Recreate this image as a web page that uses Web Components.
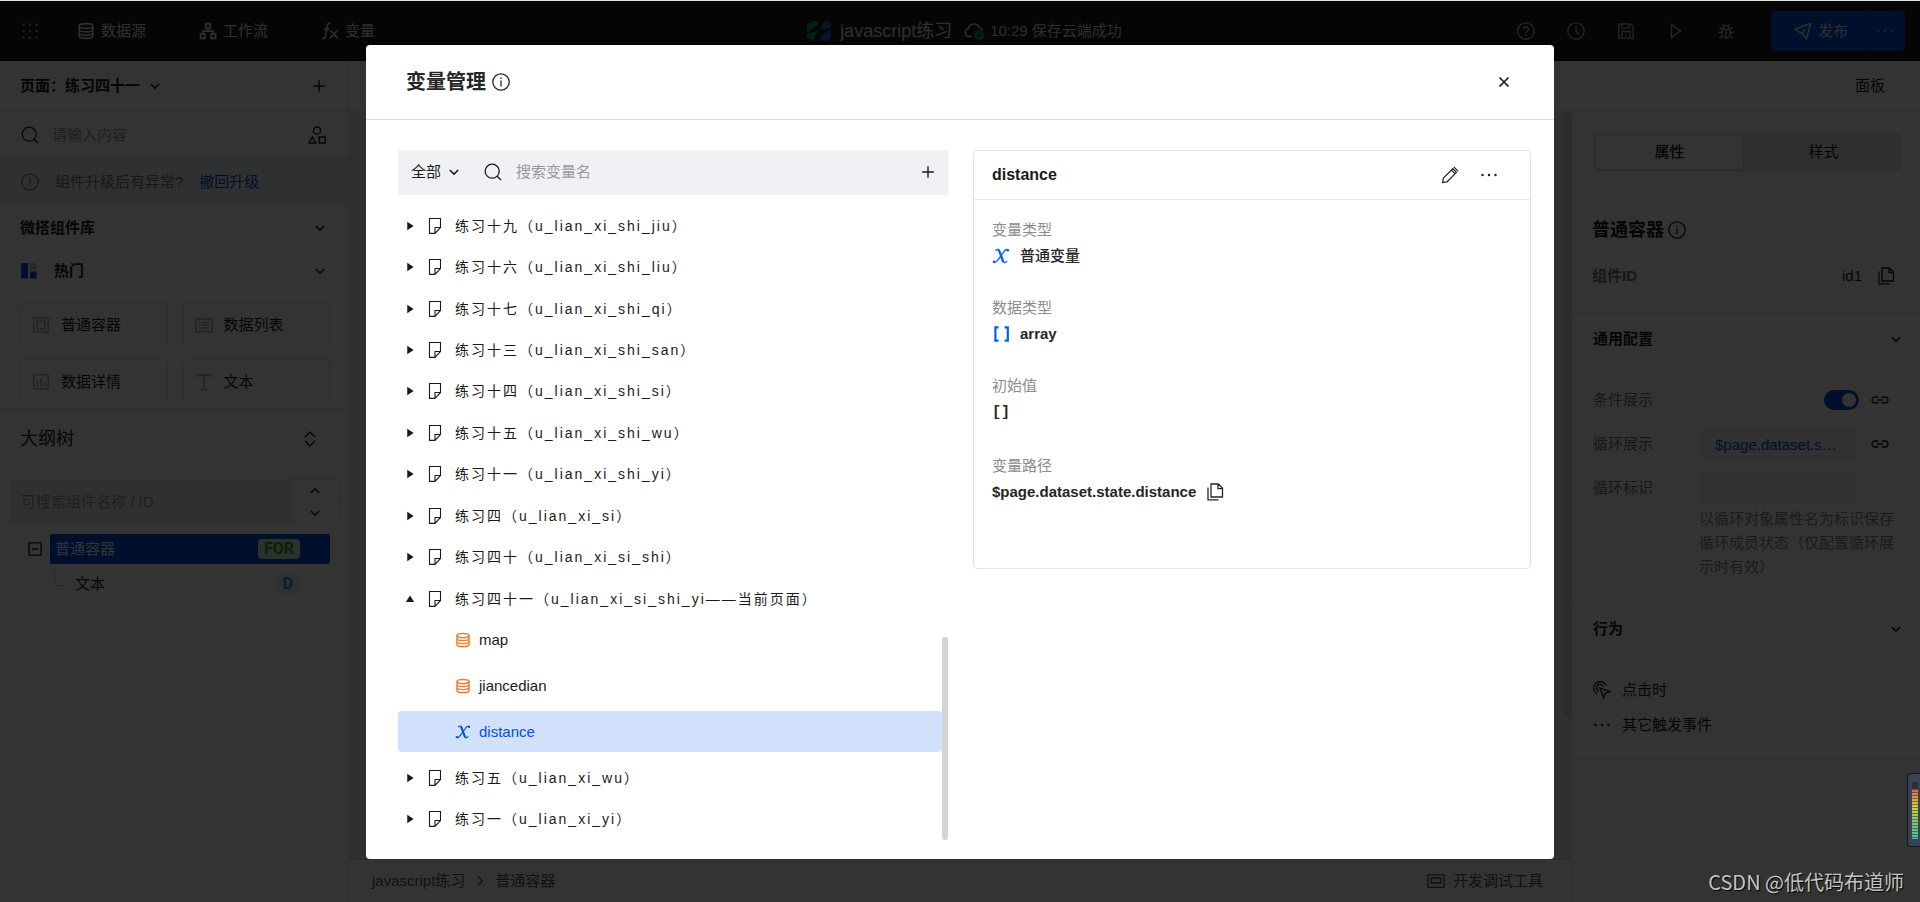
<!DOCTYPE html>
<html lang="zh-CN">
<head>
<meta charset="utf-8">
<title>变量管理</title>
<style>
html, body { margin: 0; height: 100%; }
body {
  font: 15px/24px "Liberation Sans", "Noto Sans CJK SC", sans-serif;
  color: #1a1a1a;
  background: #fff;
  overflow: hidden;
}
</style>
</head>
<body>
<low-code-app></low-code-app>
<script>
const BASE = `
*, *::before, *::after { box-sizing: border-box; }
:host { box-sizing: border-box; }
:host([hidden]) { display: none; }
button, input, select { font: inherit; color: inherit; background: none; border: 0; padding: 0; margin: 0; outline: 0; }
button { display: inline-flex; align-items: center; cursor: pointer; }
a { color: inherit; text-decoration: none; }
h1, h2, h3, p, ul, ol, dl, dt, dd { margin: 0; padding: 0; font: inherit; }
ul, ol { list-style: none; }
`;

function define(name, css, html) {
  const template = document.createElement('template');
  const isFn = typeof html === 'function';
  if (!isFn) template.innerHTML = `<style>${BASE}${css}</style>${html}`;
  customElements.define(name, class extends HTMLElement {
    connectedCallback() {
      if (this.shadowRoot) return;
      const root = this.attachShadow({ mode: 'open' });
      if (isFn) root.innerHTML = `<style>${BASE}${css}</style>${html(this)}`;
      else root.append(template.content.cloneNode(true));
    }
  });
}

/* ---------- icons: 18 x 18 grid, stroked with the current colour ---------- */
const DB = '<ellipse cx="9" cy="4" rx="6.8" ry="2.4"/><path d="M2.2 4v10c0 1.3 3 2.4 6.8 2.4s6.8-1.1 6.8-2.4V4M2.2 7.4c0 1.3 3 2.3 6.8 2.3s6.8-1 6.8-2.3M2.2 10.8c0 1.3 3 2.3 6.8 2.3s6.8-1 6.8-2.3"/>';
const ICONS = {
  grid: '<g fill="currentColor" stroke="none">' + [2.5, 9, 15.5].map(y => [2.5, 9, 15.5].map(x => `<circle cx="${x}" cy="${y}" r="1.3"/>`).join('')).join('') + '</g>',
  database: `<g stroke-width="1.6">${DB}</g>`,
  flow: '<g stroke-width="1.7"><rect x="6.8" y="1.8" width="4.4" height="4.4"/><rect x="1.5" y="12" width="4.4" height="4.4"/><rect x="12.1" y="12" width="4.4" height="4.4"/><path d="M9 6.2v3M3.7 12V9.2h10.6V12"/></g>',
  fx: '<path stroke-width="1.6" d="M1 16.4c2.6.6 3.3-.8 3.7-3.2L6.2 4C6.6 1.6 7.4.8 9.6 1.2M2.8 6.9h5.4M9.2 8.2l7.4 7.9M16.8 8.2l-7.8 7.9"/>',
  help: '<circle cx="9" cy="9" r="8.2"/><path d="M6.6 7.2c0-3.2 4.9-3 4.9-.1 0 1.8-2.4 1.9-2.4 3.9M9.05 12.6v1.4"/>',
  clock: '<circle cx="9" cy="9" r="8.2"/><path d="M9 4v5.2l3 3.3"/>',
  save: '<path d="M1.8 1.8h11.4l3 3v11.4H1.8zM5 16V9.5h8V16M5 2v4.2h7V2M9.2 11.5v3"/>',
  play: '<path stroke-width="1.5" d="M4.5 2.4v13.2L13.5 9z"/>',
  bug: '<path d="M5 7.5h8v4.3a4 4.3 0 0 1-8 0zM6 7.2a3 3.7 0 0 1 6 0M9 8v8M5 10.5H1.5M13 10.5h3.5M5 7.5 2.3 5M13 7.5 15.7 5M5.5 13.5l-3 2.7M12.5 13.5l3 2.7M6.5 3.8 5 1.8M11.5 3.8 13 1.8"/>',
  send: '<path stroke-width="1.5" d="M16.8 1.2.8 7.2l4.6 3M16.8 1.2 12.5 16.8 7.8 11.5l3.6-4.3M5.4 10.2l2.4 1.3"/>',
  more: '<g fill="currentColor" stroke="none"><circle cx="2.5" cy="9" r="1.2"/><circle cx="9" cy="9" r="1.2"/><circle cx="15.5" cy="9" r="1.2"/></g>',
  down: '<path stroke-width="1.5" d="M4.8 7 9 11.1 13.2 7"/>',
  up: '<path stroke-width="1.5" d="M4.8 11 9 6.9l4.2 4.1"/>',
  right: '<path d="M7 4.5 11.3 9 7 13.5"/>',
  plus: '<path stroke-width="1.4" d="M9 3.2v11.6M3.2 9h11.6"/>',
  search: '<circle cx="8.2" cy="8.2" r="7"/><path d="m13.2 13.2 3.8 3.8"/>',
  shapes: '<circle cx="9" cy="4.6" r="3.6"/><path d="M4.3 10.8.9 17h6.8zM11.2 11h6v6h-6z"/>',
  warn: '<circle cx="9" cy="9" r="8.2"/><path d="M9 4.5v6M9 12v1.6"/>',
  info: '<circle cx="9" cy="9" r="8.2"/><path d="M9 7.5v6M9 4.5v1.5"/>',
  hot: '<g stroke="none"><path fill="#0052d9" d="M1 1h7v15.5H1zM10 9.5h6.5v7H10z"/><path fill="#b5c9f0" d="M10 1h6.5v6.5H10z"/></g>',
  box: '<path d="M1.8 1.8h14.4v14.4H1.8zM5.2 5.2h7.6v7.6H5.2z"/>',
  list: '<path d="M.8 3h16.4v12.5H.8zM4 6.5h1.2M6.5 6.5H14M4 9.2h1.2M6.5 9.2H14M4 12h1.2M6.5 12H14"/>',
  chart: '<path d="M1.8 1.8h14.4v14.4H1.8zM5.2 7.5v6M9 5v8.5M12.8 9.5v4"/>',
  text: '<path d="M1.8 4.8V2h14.4v2.8M9 2v14.2M5.5 16.5h7"/>',
  updown: '<path stroke-width="1.5" d="M4 7 9 2l5 5M4 11l5 5 5-5"/>',
  minus: '<path stroke-width="1.5" d="M2.2 2.2h13.6v13.6H2.2zM5.5 9h7"/>',
  close: '<path stroke-width="1.7" d="m4.5 4.5 9 9M13.5 4.5l-9 9"/>',
  page: '<path stroke-width="1.1" d="M14.5 10.5V1.5h-11v14.900H9zM9 16.2v-5.700h5.300"/>',
  tright: '<path fill="currentColor" stroke="none" d="M4 1.5 15.500 9 4 16.500z"/>',
  tup: '<path fill="currentColor" stroke="none" d="M9 2.500 16.500 14.500H1.500z"/>',
  edit: '<path stroke-width="1.2" d="m1.7 16.5.6-4.3L11.8 2.7l3.6 3.6L6 15.9zM10.4 4.2l3.5 3.5M12.8.9l4.2 4.2"/>',
  copy: '<path d="M5 1h7.3l4.2 4.3V14H5zM12 1.2v4.5h4.3"/><path d="M2 4.5v12.3h10.5"/>',
  link: '<path d="M7.2 6H4a3 3 0 0 0 0 6h3.2M10.8 6H14a3 3 0 0 1 0 6h-3.2M6 9h6"/>',
  click: '<path d="M4.2 13A6.6 6.6 0 1 1 13.4 4.5M5.6 10.2a3.7 3.7 0 1 1 5-5M7 7l10 3.6-4.7 1.7L10.5 17z"/>',
  panel: '<path d="M1 2.8h16v12.6H1zM4.2 6h9.6v5H4.2z"/>',
  variable: '<path stroke-width="2.4" d="M6.3 2.6c1.7 1.3 3.6 9.9 5.3 12.6"/><path stroke-width="1.3" d="M3.6 3.6c.7-.9 1.7-1.5 3-1.3M11.5 15.5c1.4.5 2.6-.2 3.5-1.5M16.4 3.2c-1.7-1.5-3-.6-4.6 1.6L6.2 12.6c-1.5 2.2-2.9 3.7-5 2.4"/><g fill="currentColor" stroke="none"><circle cx="15.8" cy="3.3" r="1.3"/><circle cx="2" cy="14.7" r="1.3"/></g>',
  array: '<path stroke-width="2.2" d="M6.6 2.4H3.4v13.2h3.2M12.6 2.4h3.2v13.2h-3.2"/>',
  logo: '<g stroke="none"><path fill="#0c9d62" d="M0 3.4 4.8 1.5h2L8.9 3.4 4 7.5 0 9.9zM0 10.9 7.3 9 9.5 8.2 6.5 11.5 5.5 16.5 0 14.4z"/><path fill="#2f62d8" d="M9.3 7.6 12.5 2.4 15.5 1.5 18 3.4V6L13.5 8zM18 7.9v6.5L14.5 16.5h-2L9 14.8 13.5 10.5z"/></g>',
  cloud: '<path d="M7 14H4.5A3.7 3.7 0 0 1 4 6.7 5 5 0 0 1 13.6 6c1.5.3 2.5 1.2 3 2.4"/><circle cx="13.5" cy="12.5" r="4.5" fill="#0a9d5c" stroke="none"/><path stroke="#191919" d="m11.5 12.5 1.5 1.6 2.5-2.8"/>'
};
define('ui-icon',
  ':host{display:inline-flex;flex:none} svg{display:block;fill:none;stroke:currentColor;stroke-width:1.3}',
  el => { const s = el.getAttribute('size') || 18;
    return `<svg width="${s}" height="${s}" viewBox="0 0 18 18" aria-hidden="true">${ICONS[el.getAttribute('name')]}</svg>`; });

/* ---------- top bar ---------- */
define('nav-link',
  ':host{display:inline-flex} a{display:flex;align-items:center;gap:6px}',
  el => `<a href="#"><ui-icon name="${el.getAttribute('icon')}"></ui-icon><slot></slot></a>`);

define('top-bar', `
:host { display: grid; grid-template-columns: 1fr auto 1fr; align-items: center; height: 60px; background: #191919; color: #e8e8e8; }
nav { display: flex; align-items: center; gap: 53px; padding-left: 21px; }
nav button { color: #999; margin-right: -15px; }
.doc { display: flex; align-items: center; padding-left: 9px; }
.doc h1 { font-size: 18px; margin: 0 12px 0 9px; }
.doc span { margin-left: 6px; color: #ddd; }
.tools { display: flex; align-items: center; justify-content: flex-end; gap: 32px; padding-right: 15px; color: #bbb; }
.publish { display: flex; margin-left: 4px; height: 40px; background: #0052d9; border-radius: 4px; color: #e8e8e8; }
.publish .go { padding: 0 17px 0 23px; gap: 6px; border-right: 1px solid #003cab; }
.publish .opt { padding: 0 11px 0 10px; color: #b0b0b0; }
`, `
<nav aria-label="主导航"><button aria-label="应用"><ui-icon name="grid"></ui-icon></button>
<nav-link icon="database">数据源</nav-link><nav-link icon="flow">工作流</nav-link><nav-link icon="fx">变量</nav-link></nav>
<div class="doc"><ui-icon name="logo" size="24"></ui-icon><h1>javascript练习</h1><ui-icon name="cloud" size="20"></ui-icon><span>10:29 保存云端成功</span></div>
<div class="tools">
<button aria-label="帮助"><ui-icon name="help"></ui-icon></button><button aria-label="历史"><ui-icon name="clock"></ui-icon></button>
<button aria-label="保存"><ui-icon name="save"></ui-icon></button><button aria-label="预览"><ui-icon name="play"></ui-icon></button>
<button aria-label="调试"><ui-icon name="bug"></ui-icon></button>
<div class="publish"><button class="go"><ui-icon name="send"></ui-icon>发布</button><button class="opt" aria-label="更多发布选项"><ui-icon name="more"></ui-icon></button></div>
</div>`);

/* ---------- left panel ---------- */
define('component-tile', `
:host { display: block; }
button { width: 100%; height: 45px; gap: 11px; padding: 0 11px; border: 1px solid #e2e2e2; border-radius: 4px; }
ui-icon { color: #9aa3b5; }
`, el => `<button><ui-icon name="${el.getAttribute('icon')}"></ui-icon><slot></slot></button>`);

define('outline-tree', `
:host { display: block; padding: 0 18px 0 50px; margin-top: 10px; }
.node { display: flex; align-items: center; height: 30px; padding: 0 30px 0 5px; border-radius: 2px; background: #0052d9; color: #fff; position: relative; }
.toggle { position: absolute; left: -23px; top: 7px; color: #1a1a1a; }
.name { flex: 1; }
.tag { font: bold 16px/20px Roboto, "Liberation Sans", sans-serif; padding: 0 6px; border-radius: 4px; background: #d6f5d6; color: #2ba82f; }
.child { background: none; color: #1a1a1a; height: 36px; margin-top: 2px; padding-left: 25px; }
.child::before { content: ""; position: absolute; left: 4px; top: 4px; width: 14px; height: 16px; border: solid #d0d0d0; border-width: 0 0 1px 1px; }
.child .tag { background: #e6eef5; color: #00a0e9; padding: 0 7px; }
`, `<ul><li class="node"><button class="toggle" aria-label="收起"><ui-icon name="minus" size="16"></ui-icon></button><span class="name">普通容器</span><span class="tag">FOR</span></li>
<li class="node child"><span class="name">文本</span><span class="tag">D</span></li></ul>`);

define('side-panel', `
:host { display: block; background: #fff; border-right: 1px solid #e6e6e6; }
.row { display: flex; align-items: center; justify-content: space-between; padding: 0 19px 0 20px; }
.head { height: 51px; border-bottom: 1px solid #e6e6e6; font-weight: bold; padding-right: 20px; }
.head button { gap: 6px; font-weight: bold; }
.search { height: 46px; border-bottom: 1px solid #dedede; padding-right: 22px; padding-left: 21px; gap: 13px; }
.search input { flex: 1; min-width: 0; }
input::placeholder { color: #999; opacity: 1; }
.notice { height: 48px; background: #eaf0f8; justify-content: flex-start; padding-left: 21px; gap: 16px; color: #777; border-bottom: 1px solid #dde3ee; }
.notice a { color: #0052d9; }
.group { height: 43px; font-weight: bold; }
.group span { display: flex; align-items: center; gap: 16px; }
.tiles { display: grid; grid-template-columns: 1fr 1fr; gap: 12px 15px; padding: 10px 18px 4px 20px; border-bottom: 1px solid #dedede; }
.outline { height: 60px; font-size: 18px; padding-right: 29px; }
.find { display: flex; margin: 10px 8px 0 10px; height: 45px; }
.find input { flex: 1; min-width: 0; background: #f0f0f0; border-radius: 4px 0 0 4px; padding: 0 11px; }
.step { display: grid; width: 50px; border: 1px solid #dedede; }
.step button { justify-content: center; }
.step button + button { border-top: 1px solid #dedede; }
`, `
<div class="row head"><button>页面：练习四十一<ui-icon name="down"></ui-icon></button><button aria-label="新建页面"><ui-icon name="plus"></ui-icon></button></div>
<div class="row search"><ui-icon name="search"></ui-icon><input type="text" aria-label="搜索组件" placeholder="请输入内容"><button aria-label="组件分类"><ui-icon name="shapes"></ui-icon></button></div>
<div class="row notice"><ui-icon name="warn"></ui-icon><span>组件升级后有异常?</span><a href="#">撤回升级</a></div>
<div class="row group"><span>微搭组件库</span><ui-icon name="down"></ui-icon></div>
<div class="row group"><span><ui-icon name="hot"></ui-icon>热门</span><ui-icon name="down"></ui-icon></div>
<div class="tiles"><component-tile icon="box">普通容器</component-tile><component-tile icon="list">数据列表</component-tile><component-tile icon="chart">数据详情</component-tile><component-tile icon="text">文本</component-tile></div>
<div class="row outline"><h2>大纲树</h2><button aria-label="展开全部"><ui-icon name="updown"></ui-icon></button></div>
<div class="find"><input type="text" aria-label="搜索大纲树" placeholder="可搜索组件名称 / ID"><div class="step"><button aria-label="上一个"><ui-icon name="up"></ui-icon></button><button aria-label="下一个"><ui-icon name="down"></ui-icon></button></div></div>
<outline-tree></outline-tree>`);

/* ---------- canvas ---------- */
define('canvas-area', `
:host { display: flex; flex-direction: column; min-width: 0; background: #ebebeb; }
.stage { flex: 1; display: flex; justify-content: flex-end; }
.thumb { width: 7px; height: 81%; border-radius: 4px; background: #d4d4d4; }
footer { display: flex; align-items: center; gap: 6px; height: 43px; padding: 0 28px 0 23px; background: #fff; border-top: 1px solid #e0e0e0; color: #555; }
.dev { margin-left: auto; gap: 8px; }
`, `
<div class="stage"><div class="thumb"></div></div>
<footer><a href="#">javascript练习</a><ui-icon name="right"></ui-icon><a href="#">普通容器</a><button class="dev"><ui-icon name="panel"></ui-icon>开发调试工具</button></footer>`);

/* ---------- property panel ---------- */
define('panel-section', `
:host { display: block; border-top: 1px solid #e0e0e0; padding: 0 15px 0 21px; }
h3 { display: flex; justify-content: space-between; align-items: center; height: 50px; font-weight: bold; }
`, el => `<h3>${el.getAttribute('heading')}<ui-icon name="down"></ui-icon></h3><slot></slot>`);

define('property-panel', `
:host { display: block; background: #fff; border-left: 1px solid #e6e6e6; }
.tabs { display: grid; grid-template-columns: 147px 1fr; gap: 6px; height: 40px; margin: 20px 19px 0 21px; padding: 3px; border-radius: 6px; background: #e6eaee; }
.tabs button { justify-content: center; border-radius: 4px; }
.tabs button[aria-selected=true] { background: #fff; box-shadow: 0 1px 2px #bbb; font-weight: 500; }
h2 { display: flex; align-items: center; gap: 4px; margin: 43px 20px 0; height: 30px; font-size: 18px; font-weight: bold; }
.id { display: flex; align-items: center; gap: 15px; height: 30px; padding: 0 25px 0 20px; margin: 16px 0 22px; }
.id b { flex: 1; color: #777; }
.field { display: flex; align-items: center; height: 30px; margin-bottom: 14px; color: #777; padding-right: 16px; }
.field label { width: 106px; }
.field input[type=text] { width: 159px; height: 30px; border-radius: 4px; background: #f2f2f2; }
.field .bound { color: #0052d9; background: #e6ebf8; padding: 0 16px; }
.field ui-icon { color: #1a1a1a; margin-left: auto; }
.switch { appearance: none; width: 35px; height: 20px; border-radius: 10px; background: #0052d9; margin-left: 125px; padding: 3px; display: flex; justify-content: flex-end; }
.switch::before { content: ""; width: 14px; height: 14px; border-radius: 7px; background: #fff; }
.fields { padding-top: 21px; }
.tip { width: 200px; margin: -8px 0 24px 106px; color: #888; }
.field:has(+ .tip) { margin-bottom: 12px; }
.event { display: flex; width: 100%; gap: 11px; height: 35px; }
.events { padding: 18px 0 16px; }
.end { border-top: 1px solid #e0e0e0; }
`, `
<div class="tabs" role="tablist"><button role="tab" aria-selected="true">属性</button><button role="tab" aria-selected="false">样式</button></div>
<h2>普通容器<ui-icon name="info"></ui-icon></h2>
<div class="id"><b>组件ID</b><span>id1</span><button aria-label="复制组件ID"><ui-icon name="copy"></ui-icon></button></div>
<panel-section heading="通用配置"><div class="fields">
<div class="field"><label for="cond">条件展示</label><input class="switch" id="cond" type="checkbox" checked><ui-icon name="link"></ui-icon></div>
<div class="field"><label for="loop">循环展示</label><input class="bound" id="loop" type="text" value="$page.dataset.s…" readonly><ui-icon name="link"></ui-icon></div>
<div class="field"><label for="key">循环标识</label><input id="key" type="text"></div>
<p class="tip">以循环对象属性名为标识保存循环成员状态（仅配置循环展示时有效）</p>
</div></panel-section>
<panel-section heading="行为"><div class="events"><button class="event"><ui-icon name="click"></ui-icon>点击时</button><button class="event"><ui-icon name="more"></ui-icon>其它触发事件</button></div></panel-section>
<div class="end"></div>`);

/* ---------- variable dialog ---------- */
define('tree-page', `
:host { display: flex; flex: 1 0 41px; align-items: center; }
button { gap: 11px; padding-left: 7px; height: 30px; white-space: nowrap; }
span { font-size: 14px; letter-spacing: 2px; }
`, el => `<button aria-expanded="${el.hasAttribute('open')}"><ui-icon name="${el.hasAttribute('open') ? 'tup' : 'tright'}" size="10"></ui-icon><ui-icon name="page"></ui-icon><span><slot></slot></span></button>`);

define('tree-variable', `
:host { display: block; flex: none; margin-bottom: 5px; --tone: #ed7b2f; }
button { width: 100%; height: 41px; gap: 8px; padding-left: 57px; border-radius: 4px; }
ui-icon { color: var(--tone); }
:host([selected]) button { color: #0052d9; background: #d2e1fb; }
:host([selected]) { --tone: #0052d9; }
`, el => `<button><ui-icon name="${el.getAttribute('icon')}" size="16"></ui-icon><slot></slot></button>`);

define('variable-list', `
:host { display: flex; flex-direction: column; min-width: 0; }
.bar { display: flex; align-items: center; height: 45px; padding: 0 11px 2px 13px; background: #f0f1f5; }
.filter { display: flex; align-items: center; gap: 3px; margin-right: 21px; }
select { appearance: none; }
input { flex: 1; min-width: 0; margin-left: 14px; }
input::placeholder { color: #999; opacity: 1; }
.scroll { flex: 1; display: flex; margin-top: 10px; }
.rows { flex: 1; display: flex; flex-direction: column; }
.track { width: 6px; display: flex; flex-direction: column; justify-content: flex-end; }
.thumb { height: 32%; border-radius: 3px; background: #d4d4d4; }
`, `
<div class="bar"><label class="filter"><select aria-label="变量范围"><option>全部</option></select><ui-icon name="down"></ui-icon></label>
<ui-icon name="search"></ui-icon><input type="text" aria-label="搜索变量名" placeholder="搜索变量名"><button aria-label="新建变量"><ui-icon name="plus"></ui-icon></button></div>
<div class="scroll"><div class="rows"><slot></slot></div><div class="track"><div class="thumb"></div></div></div>`);

define('detail-field', `
:host { display: block; margin-bottom: 26px; }
.label { color: #8c8c8c; }
.value { display: flex; align-items: center; gap: 10px; min-height: 28px; color: #262626; }
`, el => `<div class="label">${el.getAttribute('label')}</div><div class="value"><slot></slot></div>`);

define('variable-detail', `
:host { display: block; align-self: flex-start; border: 1px solid #e3e4ea; border-radius: 4px; }
header { display: flex; align-items: center; gap: 21px; height: 49px; padding: 0 32px 0 18px; border-bottom: 1px solid #e3e4ea; }
h3 { flex: 1; font-size: 16px; font-weight: bold; }
.body { padding: 18px 18px 36px; }
ui-icon[name=variable], ui-icon[name=array] { color: #0061f2; }
.med { font-weight: 500; }
b { font-weight: bold; }
code { font: bold 15px/30px "Liberation Mono", monospace; }
`, `
<header><h3>distance</h3><button aria-label="编辑"><ui-icon name="edit"></ui-icon></button><button aria-label="更多"><ui-icon name="more"></ui-icon></button></header>
<div class="body">
<detail-field label="变量类型"><ui-icon name="variable"></ui-icon><span class="med">普通变量</span></detail-field>
<detail-field label="数据类型"><ui-icon name="array"></ui-icon><b>array</b></detail-field>
<detail-field label="初始值"><code>[]</code></detail-field>
<detail-field label="变量路径"><b>$page.dataset.state.distance</b><button aria-label="复制变量路径"><ui-icon name="copy"></ui-icon></button></detail-field>
</div>`);

define('variable-dialog', `
:host { position: absolute; inset: 0; display: flex; justify-content: center; padding: 44px 24px 43px; background: rgba(0,0,0,.8); }
section { display: flex; flex-direction: column; width: 100%; max-width: 1188px; background: #fff; border-radius: 4px; }
header { display: flex; align-items: center; height: 75px; padding: 0 41px 0 40px; border-bottom: 1px solid #d9dae3; }
h2 { display: flex; flex: 1; align-items: center; gap: 6px; font-size: 20px; font-weight: bold; color: #262626; }
main { flex: 1; display: flex; gap: 25px; padding: 30px 23px 19px 32px; }
variable-list { flex: 1; }
variable-detail { flex: 0 1 558px; }
`, `
<section role="dialog" aria-label="变量管理">
<header><h2>变量管理<ui-icon name="info"></ui-icon></h2><button aria-label="关闭"><ui-icon name="close" size="18"></ui-icon></button></header>
<main><variable-list>
<tree-page>练习十九（u_lian_xi_shi_jiu）</tree-page>
<tree-page>练习十六（u_lian_xi_shi_liu）</tree-page>
<tree-page>练习十七（u_lian_xi_shi_qi）</tree-page>
<tree-page>练习十三（u_lian_xi_shi_san）</tree-page>
<tree-page>练习十四（u_lian_xi_shi_si）</tree-page>
<tree-page>练习十五（u_lian_xi_shi_wu）</tree-page>
<tree-page>练习十一（u_lian_xi_shi_yi）</tree-page>
<tree-page>练习四（u_lian_xi_si）</tree-page>
<tree-page>练习四十（u_lian_xi_si_shi）</tree-page>
<tree-page open>练习四十一（u_lian_xi_si_shi_yi——当前页面）</tree-page>
<tree-variable icon="database">map</tree-variable>
<tree-variable icon="database">jiancedian</tree-variable>
<tree-variable icon="variable" selected>distance</tree-variable>
<tree-page>练习五（u_lian_xi_wu）</tree-page>
<tree-page>练习一（u_lian_xi_yi）</tree-page>
</variable-list><variable-detail></variable-detail></main>
</section>`);

/* ---------- things that float over the whole screen ---------- */
define('level-meter', `
:host { position: absolute; right: 0; top: 772px; width: 13px; height: 74px; padding: 8px 2px 7px 4px; border: 1px solid #14161f; border-right: 0; border-radius: 4px 0 0 4px; background: #3a4156; }
div { height: 100%; background: repeating-linear-gradient(transparent 0 1px, rgba(40,46,60,.55) 1px 2px, transparent 2px 3px), linear-gradient(#2a2f3d 0 12%, #e0603c 13%, #d8a13c 28%, #d6cf3c 45%, #8fc860 65%, #3fc0a0 100%); }
`, '<div></div>');

define('author-mark', `
:host { position: absolute; right: 16px; bottom: 5px; font: 20px/30px "Noto Sans CJK SC", sans-serif; color: #c4c4c4; text-shadow: 1px 1px 1px #000; }
`, '<slot></slot>');

define('low-code-app', `
:host { display: flex; flex-direction: column; height: 100vh; border-top: 1px solid #dfe3e3; position: relative; }
.work { flex: 1; display: grid; grid-template-columns: 349px 1fr 349px; grid-template-rows: 51px 1fr; min-height: 0; }
side-panel { grid-row: 1 / 3; }
.toolbar { grid-column: 2 / 4; display: flex; align-items: center; justify-content: flex-end; padding-right: 35px; background: #fff; border-bottom: 1px solid #e6e6e6; }
`, `
<top-bar></top-bar>
<div class="work"><side-panel></side-panel><div class="toolbar"><button>面板</button></div><canvas-area></canvas-area><property-panel></property-panel></div>
<variable-dialog></variable-dialog>
<level-meter></level-meter>
<author-mark>CSDN @低代码布道师</author-mark>`);
</script>
</body>
</html>
